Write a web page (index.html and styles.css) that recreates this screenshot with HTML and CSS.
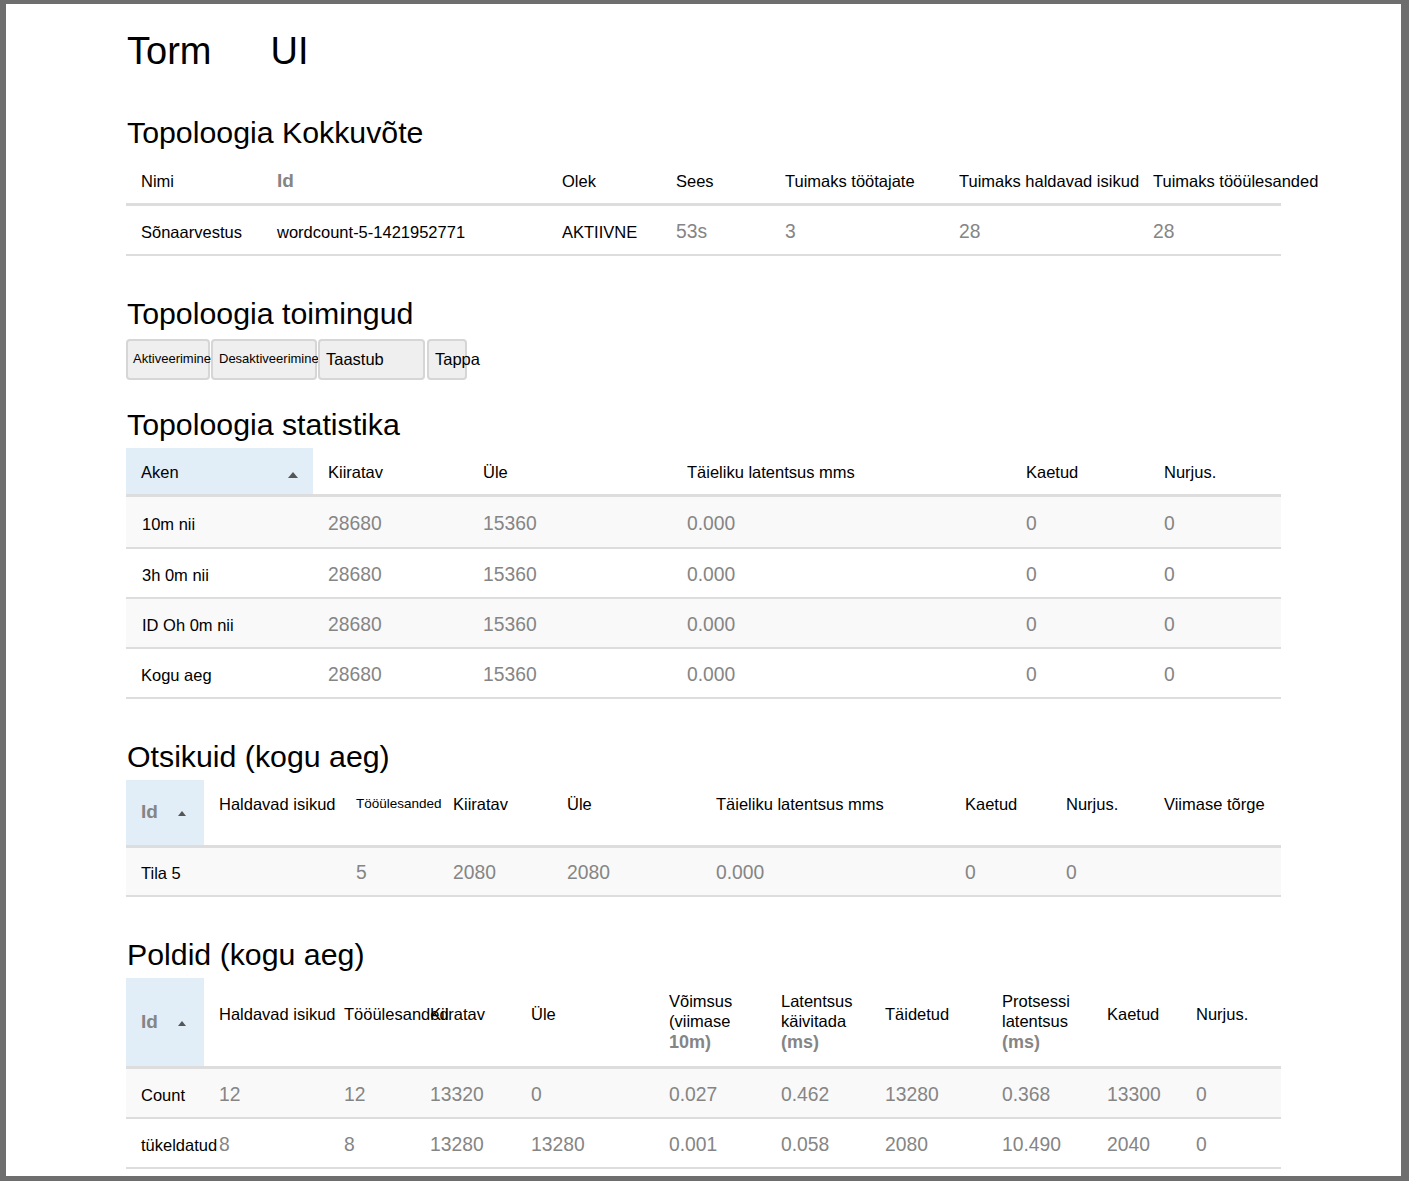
FILE: index.html
```html
<!DOCTYPE html>
<html lang="et">
<head>
<meta charset="utf-8">
<title>Torm UI</title>
<link rel="stylesheet" href="styles.css">
</head>
<body>
<div class="frame">
  <main class="container">
    <h1 class="title"><span>Torm</span><span class="title-ui">UI</span></h1>

    <h2 class="section section-first">Topoloogia Kokkuvõte</h2>
    <table class="grid summary">
      <colgroup><col><col><col><col><col><col><col></colgroup>
      <thead>
        <tr>
          <th>Nimi</th>
          <th class="id-head">Id</th>
          <th>Olek</th>
          <th>Sees</th>
          <th>Tuimaks töötajate</th>
          <th>Tuimaks haldavad isikud</th>
          <th>Tuimaks tööülesanded</th>
        </tr>
      </thead>
      <tbody>
        <tr>
          <td>Sõnaarvestus</td>
          <td>wordcount-5-1421952771</td>
          <td>AKTIIVNE</td>
          <td class="num">53s</td>
          <td class="num">3</td>
          <td class="num">28</td>
          <td class="num">28</td>
        </tr>
      </tbody>
    </table>

    <h2 class="section">Topoloogia toimingud</h2>
    <div class="actions">
      <button class="btn btn-sm btn-activate" type="button">Aktiveerimine</button>
      <button class="btn btn-sm btn-deactivate" type="button">Desaktiveerimine</button>
      <button class="btn btn-rebalance" type="button">Taastub</button>
      <button class="btn btn-kill" type="button">Tappa</button>
    </div>

    <h2 class="section section-after-actions">Topoloogia statistika</h2>
    <table class="grid stats striped">
      <colgroup><col><col><col><col><col><col></colgroup>
      <thead>
        <tr>
          <th class="sorted"><span>Aken</span><span class="caret-up caret-right"></span></th>
          <th>Kiiratav</th>
          <th>Üle</th>
          <th>Täieliku latentsus mms</th>
          <th>Kaetud</th>
          <th>Nurjus.</th>
        </tr>
      </thead>
      <tbody>
        <tr>
          <td class="win">10m nii</td>
          <td class="num">28680</td>
          <td class="num">15360</td>
          <td class="num">0.000</td>
          <td class="num">0</td>
          <td class="num">0</td>
        </tr>
        <tr>
          <td class="win">3h 0m nii</td>
          <td class="num">28680</td>
          <td class="num">15360</td>
          <td class="num">0.000</td>
          <td class="num">0</td>
          <td class="num">0</td>
        </tr>
        <tr>
          <td class="win">ID Oh 0m nii</td>
          <td class="num">28680</td>
          <td class="num">15360</td>
          <td class="num">0.000</td>
          <td class="num">0</td>
          <td class="num">0</td>
        </tr>
        <tr>
          <td>Kogu aeg</td>
          <td class="num">28680</td>
          <td class="num">15360</td>
          <td class="num">0.000</td>
          <td class="num">0</td>
          <td class="num">0</td>
        </tr>
      </tbody>
    </table>

    <h2 class="section">Otsikuid (kogu aeg)</h2>
    <table class="grid spouts striped tall-head">
      <colgroup><col><col><col><col><col><col><col><col><col></colgroup>
      <thead>
        <tr>
          <th class="sorted id-head">Id<span class="caret-up caret-sm"></span></th>
          <th>Haldavad isikud</th>
          <th class="small-head">Tööülesanded</th>
          <th>Kiiratav</th>
          <th>Üle</th>
          <th>Täieliku latentsus mms</th>
          <th>Kaetud</th>
          <th>Nurjus.</th>
          <th>Viimase tõrge</th>
        </tr>
      </thead>
      <tbody>
        <tr>
          <td>Tila 5</td>
          <td class="num"></td>
          <td class="num">5</td>
          <td class="num">2080</td>
          <td class="num">2080</td>
          <td class="num">0.000</td>
          <td class="num">0</td>
          <td class="num">0</td>
          <td class="num"></td>
        </tr>
      </tbody>
    </table>

    <h2 class="section">Poldid (kogu aeg)</h2>
    <table class="grid bolts striped tall-head">
      <colgroup><col><col><col><col><col><col><col><col><col><col><col></colgroup>
      <thead>
        <tr>
          <th class="sorted id-head">Id<span class="caret-up caret-sm"></span></th>
          <th>Haldavad isikud</th>
          <th>Tööülesanded</th>
          <th>Kiiratav</th>
          <th>Üle</th>
          <th class="multi">Võimsus<br>(viimase<br><b class="unit">10m)</b></th>
          <th class="multi">Latentsus<br>käivitada<br><b class="unit">(ms)</b></th>
          <th>Täidetud</th>
          <th class="multi">Protsessi<br>latentsus<br><b class="unit">(ms)</b></th>
          <th>Kaetud</th>
          <th>Nurjus.</th>
        </tr>
      </thead>
      <tbody>
        <tr>
          <td>Count</td>
          <td class="num">12</td>
          <td class="num">12</td>
          <td class="num">13320</td>
          <td class="num">0</td>
          <td class="num">0.027</td>
          <td class="num">0.462</td>
          <td class="num">13280</td>
          <td class="num">0.368</td>
          <td class="num">13300</td>
          <td class="num">0</td>
        </tr>
        <tr>
          <td>tükeldatud</td>
          <td class="num">8</td>
          <td class="num">8</td>
          <td class="num">13280</td>
          <td class="num">13280</td>
          <td class="num">0.001</td>
          <td class="num">0.058</td>
          <td class="num">2080</td>
          <td class="num">10.490</td>
          <td class="num">2040</td>
          <td class="num">0</td>
        </tr>
      </tbody>
    </table>
  </main>
</div>
</body>
</html>
```

FILE: styles.css
```css
html {
  background: #6e6e6e;
}

body {
  margin: 0;
  height: 1181px;
  overflow: hidden;
  background: #6e6e6e;
  font-family: "Liberation Sans", Arial, Helvetica, sans-serif;
  color: #000;
}

.frame {
  margin: 4px 8px 0 6px;
  height: 1172px;
  background: #fff;
  overflow: hidden;
}

.container {
  display: block;
  width: 1155px;
  margin: 0 auto;
}

/* Headings */
.title {
  margin: 27px 0 0 1px;
  font-size: 38px;
  line-height: 40px;
  font-weight: normal;
}

.title-ui {
  margin-left: 59px;
}

.section {
  margin: 41px 0 6px 1px;
  font-size: 30.3px;
  line-height: 34px;
  font-weight: normal;
}

.section-first {
  margin-top: 45px;
}

.section-after-actions {
  margin-top: 28px;
}

/* Action buttons */
.actions {
  display: flex;
  gap: 1px;
  margin-top: 7.5px;
}

.btn {
  box-sizing: border-box;
  height: 41px;
  margin: 0;
  padding: 0 6px;
  border: 2px solid #d6d6d6;
  border-radius: 4px;
  background: #efefef;
  color: #000;
  font-family: inherit;
  font-size: 16.5px;
  line-height: 20px;
  text-align: left;
  white-space: nowrap;
  overflow: visible;
}

.btn-sm {
  font-size: 13px;
}

.btn-activate {
  width: 84px;
  padding-left: 5px;
}

.btn-deactivate {
  width: 106px;
}

.btn-rebalance {
  width: 107px;
}

.btn-kill {
  width: 40px;
  margin-left: 1px;
}

/* Tables */
.grid {
  width: 1155px;
  table-layout: fixed;
  border-collapse: separate;
  border-spacing: 0;
}

.grid th,
.grid td {
  padding: 0 15px;
  font-size: 16.5px;
  line-height: 24px;
  font-weight: normal;
  text-align: left;
  vertical-align: middle;
  white-space: nowrap;
  overflow: visible;
}

.grid thead th {
  border-bottom: 3px solid #dddddd;
}

.grid tbody td {
  padding-top: 14px;
  padding-bottom: 10px;
  border-bottom: 2px solid #dddddd;
}

.grid .num {
  color: #858585;
  font-size: 19.3px;
}

.grid td.win {
  padding-left: 16px;
}

.striped tbody tr:nth-child(odd) td {
  background: #f9f9f9;
}

.grid th.sorted {
  background: #e1edf7;
}

.grid th.id-head {
  color: #858585;
  font-size: 19px;
  font-weight: bold;
}

.grid th.small-head {
  font-size: 13.5px;
}

.caret-up {
  display: inline-block;
  width: 0;
  height: 0;
  border-left: 5.5px solid transparent;
  border-right: 5.5px solid transparent;
  border-bottom: 6px solid #555;
}

.caret-right {
  float: right;
  margin-top: 12px;
}

.caret-sm {
  margin-left: 20px;
  border-left-width: 4.5px;
  border-right-width: 4.5px;
  border-bottom-width: 5px;
  vertical-align: 2px;
}

/* Summary */
.summary thead th {
  padding-top: 13px;
  padding-bottom: 10px;
}

.summary col:nth-child(1) { width: 136px; }
.summary col:nth-child(2) { width: 285px; }
.summary col:nth-child(3) { width: 114px; }
.summary col:nth-child(4) { width: 109px; }
.summary col:nth-child(5) { width: 174px; }
.summary col:nth-child(6) { width: 194px; }
.summary col:nth-child(7) { width: 143px; }

/* Statistics */
.stats thead th {
  padding-top: 12px;
  padding-bottom: 10px;
}

.stats tbody tr:first-child td {
  padding-top: 15px;
  padding-bottom: 11px;
}

.stats col:nth-child(1) { width: 187px; }
.stats col:nth-child(2) { width: 155px; }
.stats col:nth-child(3) { width: 204px; }
.stats col:nth-child(4) { width: 339px; }
.stats col:nth-child(5) { width: 138px; }
.stats col:nth-child(6) { width: 132px; }

/* Tall headers (spouts and bolts) */
.tall-head thead th {
  padding-top: 0;
  padding-bottom: 16px;
}

.tall-head thead th.sorted,
.tall-head thead th.multi {
  padding-bottom: 0;
}

.grid th.multi {
  line-height: 20.5px;
}

.unit {
  color: #858585;
  font-size: 18px;
  font-weight: bold;
}

/* Spouts */
.spouts thead tr {
  height: 68px;
}

.spouts tbody td {
  padding-top: 13px;
  padding-bottom: 10px;
}

.spouts col:nth-child(1) { width: 78px; }
.spouts col:nth-child(2) { width: 137px; }
.spouts col:nth-child(3) { width: 97px; }
.spouts col:nth-child(4) { width: 114px; }
.spouts col:nth-child(5) { width: 149px; }
.spouts col:nth-child(6) { width: 249px; }
.spouts col:nth-child(7) { width: 101px; }
.spouts col:nth-child(8) { width: 98px; }
.spouts col:nth-child(9) { width: 132px; }

/* Bolts */
.bolts thead tr {
  height: 91px;
}

.bolts col:nth-child(1) { width: 78px; }
.bolts col:nth-child(2) { width: 125px; }
.bolts col:nth-child(3) { width: 86px; }
.bolts col:nth-child(4) { width: 101px; }
.bolts col:nth-child(5) { width: 138px; }
.bolts col:nth-child(6) { width: 112px; }
.bolts col:nth-child(7) { width: 104px; }
.bolts col:nth-child(8) { width: 117px; }
.bolts col:nth-child(9) { width: 105px; }
.bolts col:nth-child(10) { width: 89px; }
.bolts col:nth-child(11) { width: 100px; }
```
